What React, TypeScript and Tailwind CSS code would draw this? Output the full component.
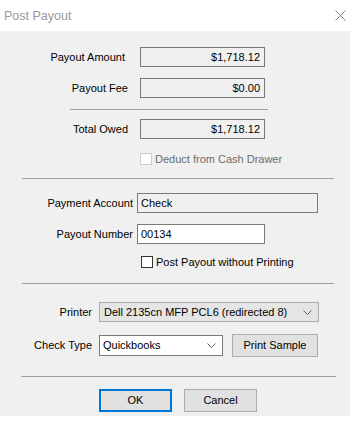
import React from "react";

const font = { fontFamily: '"Liberation Sans", Arial, sans-serif' };

function Chevron() {
  return (
    <svg width="9" height="5" viewBox="0 0 9 5" className="shrink-0">
      <polyline points="0.5,0.5 4.5,4.5 8.5,0.5" fill="none" stroke="#606060" strokeWidth="1" />
    </svg>
  );
}

function Check({ label, disabled }: { label: string; disabled?: boolean }) {
  return (
    <div className="flex items-center gap-[3px]">
      <div
        className={`w-[12px] h-[12px] border bg-white ${
          disabled ? "border-[#cccccc]" : "border-[#333333]"
        }`}
      />
      <span className={disabled ? "text-[#6d6d6d]" : "text-black"}>{label}</span>
    </div>
  );
}

export default function App() {
  return (
    <div className="w-[355px] h-[421px] bg-white text-[11px] text-black leading-none whitespace-nowrap" style={font}>
      <div className="h-[31px] flex items-center justify-between pl-[4px] pr-[9px]">
        <span className="text-[12.5px] text-[#999999] pt-[1px]">Post Payout</span>
        <svg width="11" height="11" viewBox="0 0 11 11">
          <line x1="0.5" y1="0.5" x2="10.5" y2="10.5" stroke="#8a8a8a" strokeWidth="1" />
          <line x1="10.5" y1="0.5" x2="0.5" y2="10.5" stroke="#8a8a8a" strokeWidth="1" />
        </svg>
      </div>

      <div className="w-[350px] h-[385px] bg-[#f0f0f0] pt-[16px] flex flex-col">
        {/* amounts */}
        <div className="flex items-center">
          <div className="w-[140px] pr-[15px] text-right">Payout Amount</div>
          <div className="w-[125px] h-[20px] border border-[#7a7a7a] flex items-center justify-end pr-[4px]">
            $1,718.12
          </div>
        </div>
        <div className="flex items-center mt-[11px]">
          <div className="w-[140px] pr-[12px] text-right">Payout Fee</div>
          <div className="w-[125px] h-[20px] border border-[#7a7a7a] flex items-center justify-end pr-[4px]">
            $0.00
          </div>
        </div>
        <div className="ml-[70px] w-[198px] h-px bg-[#a0a0a0] mt-[11px]" />
        <div className="flex items-center mt-[9px]">
          <div className="w-[140px] pr-[12px] text-right">Total Owed</div>
          <div className="w-[125px] h-[20px] border border-[#7a7a7a] flex items-center justify-end pr-[4px]">
            $1,718.12
          </div>
        </div>
        <div className="ml-[140px] mt-[14px]">
          <Check label="Deduct from Cash Drawer" disabled />
        </div>

        <div className="ml-[22px] w-[312px] h-px bg-[#a0a0a0] mt-[13px]" />

        {/* account */}
        <div className="flex items-center mt-[14px]">
          <div className="w-[137px] pr-[4px] text-right">Payment Account</div>
          <div className="w-[181px] h-[20px] border border-[#7a7a7a] flex items-center pl-[3px]">Check</div>
        </div>
        <div className="flex items-center mt-[11px]">
          <div className="w-[137px] pr-[4px] text-right">Payout Number</div>
          <div className="w-[128px] h-[20px] border border-[#7a7a7a] bg-white flex items-center pl-[3px]">00134</div>
        </div>
        <div className="ml-[141px] mt-[12px]">
          <Check label="Post Payout without Printing" />
        </div>

        <div className="ml-[22px] w-[312px] h-px bg-[#a0a0a0] mt-[15px]" />

        {/* printing */}
        <div className="flex items-center mt-[18px]">
          <div className="w-[99px] pr-[7px] text-right">Printer</div>
          <div className="w-[220px] h-[20px] border border-[#adadad] bg-[#e5e5e5] flex items-center justify-between pl-[4px] pr-[6px]">
            <span>Dell 2135cn MFP PCL6 (redirected 8)</span>
            <Chevron />
          </div>
        </div>
        <div className="flex items-center mt-[12px]">
          <div className="w-[99px] pr-[7px] text-right">Check Type</div>
          <div className="w-[124px] h-[21px] border border-[#7a7a7a] bg-white flex items-center justify-between pl-[3px] pr-[6px]">
            <span>Quickbooks</span>
            <Chevron />
          </div>
          <div className="ml-[9px] w-[86px] h-[23px] border border-[#adadad] bg-[#e1e1e1] flex items-center justify-center">
            Print Sample
          </div>
        </div>

        <div className="ml-[21px] w-[315px] h-px bg-[#a0a0a0] mt-[19px]" />

        <div className="flex items-center mt-[12px] ml-[99px] gap-[12px]">
          <div className="w-[73px] h-[23px] border-2 border-[#0078d7] bg-[#e1e1e1] flex items-center justify-center">
            OK
          </div>
          <div className="w-[73px] h-[23px] border border-[#adadad] bg-[#e1e1e1] flex items-center justify-center">
            Cancel
          </div>
        </div>
      </div>
    </div>
  );
}
